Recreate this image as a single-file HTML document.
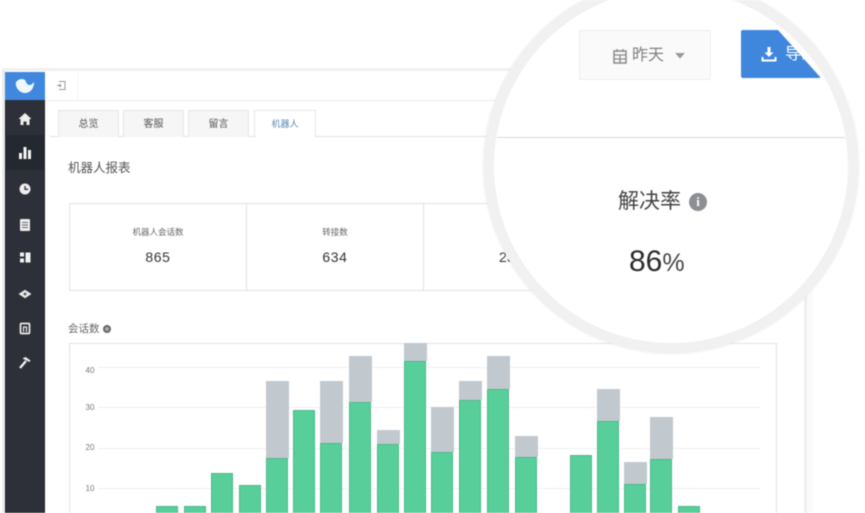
<!DOCTYPE html>
<html lang="zh"><head><meta charset="utf-8"><style>
html,body{margin:0;padding:0;background:#fff}
#p{position:relative;width:865px;height:513px;overflow:hidden;background:#fff;font-family:"Liberation Sans","Noto Sans CJK SC",sans-serif;filter:blur(.45px)}
#p div,#p span.a{position:absolute;box-sizing:border-box}
.t{white-space:nowrap;text-align:center}
.tab{top:110px;height:27px;width:61px;background:#f6f6f6;border:1px solid #e6e6e6;border-bottom:none;font-size:10px;line-height:27px;color:#555;text-align:center}
.g{background:#c1c9ce}
.b{background:#58cf9a;border:1px solid #4cb98b;border-bottom:none}
.gl{left:98px;width:662px;height:1px;background:#efefef}
.yl{left:80px;width:20px;font-size:8px;color:#777;line-height:10px;text-align:center}
</style></head><body><div id="p">
<!-- page frame -->
<div style="left:2px;top:68px;width:803px;height:3px;background:#f0f0f0"></div>
<div style="left:2px;top:70px;width:3px;height:443px;background:#ececec"></div>
<div style="left:804px;top:70px;width:3px;height:443px;background:#efefef"></div>
<div style="left:807px;top:70px;width:6px;height:443px;background:#fbfbfb"></div>
<div style="left:45px;top:100px;width:760px;height:1px;background:#ececec"></div>
<!-- sidebar -->
<div style="left:5px;top:72px;width:40px;height:441px;background:#2e3039;border-right:1px solid #23252c;border-left:1px solid #23252c"></div>
<div style="left:5px;top:72px;width:40px;height:28px;background:#3f88de"></div>
<div style="left:6px;top:135px;width:38px;height:35px;background:#23292f"></div>
<svg style="position:absolute;left:5px;top:72px" width="40" height="300" viewBox="0 0 40 300">
<path d="M11 10c3-4 9-4 10 0 1 3 4 4 6 2 1-1 2-2 2-2 0 7-4 11-9 11s-10-5-9-11z" fill="#fff" opacity=".92"/>
<path d="M20 41l6.500 6h-2v6h-3v-3.500h-3v3.500h-3v-6h-2z" fill="#eeeeee"/>
<path d="M14 81h3v6h-3zM18.500 75h3v12h-3zM23 78h3v9h-3z" fill="#f4f4f4"/>
<circle cx="20" cy="117" r="5.500" fill="#eeeeee"/><path d="M20 114v3.300h3" stroke="#33353d" stroke-width="1.300" fill="none"/>
<rect x="15" y="147" width="10" height="12" rx="1" fill="#eeeeee"/><path d="M17 150.500h6M17 153h6M17 155.500h6" stroke="#666" stroke-width="1"/>
<path d="M15 180.500h4v4h-4zM15 186.500h4v4h-4zM20.500 180.500h5v10h-5z" fill="#f2f2f2"/>
<path d="M13.500 222l6.500-4.300 6.500 4.300-6.500 4.300z" fill="#e8e8e8"/><circle cx="20" cy="222" r="1.400" fill="#555"/>
<rect x="15.500" y="251.500" width="9" height="10" rx="1" fill="none" stroke="#ececec" stroke-width="1.700"/><path d="M18.500 260v-5h3v5" stroke="#ececec" stroke-width="1.200" fill="none"/>
<path d="M15 296l6-7" stroke="#f2f2f2" stroke-width="2.300"/><path d="M17.500 286.500l7 3.500 1-1.500-5-3.500z" fill="#f2f2f2"/>
</svg>
<!-- top small icon -->
<svg style="position:absolute;left:56px;top:80px" width="11" height="11" viewBox="0 0 11 11"><path d="M3 1.500h6v8H3M1 5.500h4M3.500 4l1.500 1.500L3.500 7" fill="none" stroke="#999" stroke-width="1"/></svg>
<div style="left:77px;top:72px;width:1px;height:28px;background:#f5f5f5"></div>
<!-- tabs -->
<div style="left:50px;top:136px;width:755px;height:1px;background:#e2e2e2"></div>
<div class="tab" style="left:58px">总览</div>
<div class="tab" style="left:123px">客服</div>
<div class="tab" style="left:188px">留言</div>
<div class="tab" style="left:254px;width:62px;background:#fff;color:#5b86b5;height:28px;font-size:9px">机器人</div>
<div class="t" style="left:68px;top:159px;font-size:12.500px;line-height:18px;color:#555">机器人报表</div>
<!-- cards -->
<div style="left:69px;top:203px;width:600px;height:88px;border:1px solid #e2e2e2"></div>
<div style="left:246px;top:203px;width:1px;height:88px;background:#e2e2e2"></div>
<div style="left:423px;top:203px;width:1px;height:88px;background:#e2e2e2"></div>
<div class="t" style="left:70px;top:226px;width:176px;font-size:8.500px;line-height:12px;color:#666">机器人会话数</div>
<div class="t" style="left:70px;top:248px;width:176px;font-size:14px;line-height:18px;color:#333;letter-spacing:.6px">865</div>
<div class="t" style="left:247px;top:226px;width:176px;font-size:8.500px;line-height:12px;color:#666">转接数</div>
<div class="t" style="left:247px;top:248px;width:176px;font-size:14px;line-height:18px;color:#333;letter-spacing:.6px">634</div>
<div class="t" style="left:499px;top:248px;font-size:14px;line-height:18px;color:#333">23</div>
<!-- chart -->
<div class="t" style="left:68px;top:322px;font-size:10.500px;line-height:15px;color:#666">会话数</div>
<div style="left:103px;top:325px;width:8px;height:8px;border-radius:50%;border:2px solid #666;background:#aaa"></div>
<div style="left:69px;top:343px;width:708px;height:170px;border:1px solid #e2e2e2;border-bottom:none"></div>
<div class="gl" style="top:367px"></div><div class="gl" style="top:407px"></div><div class="gl" style="top:448px"></div><div class="gl" style="top:488px"></div>
<div class="yl" style="top:366px">40</div><div class="yl" style="top:403px">30</div><div class="yl" style="top:443px">20</div><div class="yl" style="top:484px">10</div>
<!-- bars -->
<div class="b" style="left:156px;top:506px;width:22px;height:7px"></div>
<div class="b" style="left:184px;top:506px;width:22px;height:7px"></div>
<div class="b" style="left:211px;top:473px;width:22px;height:40px"></div>
<div class="b" style="left:239px;top:485px;width:22px;height:28px"></div>
<div class="g" style="left:266px;top:381px;width:23px;height:77px"></div><div class="b" style="left:266px;top:458px;width:22px;height:55px"></div>
<div class="b" style="left:293px;top:410px;width:22px;height:103px"></div>
<div class="g" style="left:320px;top:381px;width:23px;height:62px"></div><div class="b" style="left:320px;top:443px;width:22px;height:70px"></div>
<div class="g" style="left:349px;top:356px;width:23px;height:46px"></div><div class="b" style="left:349px;top:402px;width:22px;height:111px"></div>
<div class="g" style="left:377px;top:430px;width:23px;height:14px"></div><div class="b" style="left:377px;top:444px;width:22px;height:69px"></div>
<div class="g" style="left:404px;top:343px;width:23px;height:18px"></div><div class="b" style="left:404px;top:361px;width:22px;height:152px"></div>
<div class="g" style="left:431px;top:407px;width:23px;height:45px"></div><div class="b" style="left:431px;top:452px;width:22px;height:61px"></div>
<div class="g" style="left:459px;top:381px;width:23px;height:19px"></div><div class="b" style="left:459px;top:400px;width:22px;height:113px"></div>
<div class="g" style="left:487px;top:356px;width:23px;height:33px"></div><div class="b" style="left:487px;top:389px;width:22px;height:124px"></div>
<div class="g" style="left:515px;top:436px;width:23px;height:21px"></div><div class="b" style="left:515px;top:457px;width:22px;height:56px"></div>
<div class="b" style="left:570px;top:455px;width:22px;height:58px"></div>
<div class="g" style="left:597px;top:389px;width:23px;height:32px"></div><div class="b" style="left:597px;top:421px;width:22px;height:92px"></div>
<div class="g" style="left:624px;top:462px;width:23px;height:22px"></div><div class="b" style="left:624px;top:484px;width:22px;height:29px"></div>
<div class="g" style="left:650px;top:417px;width:23px;height:42px"></div><div class="b" style="left:650px;top:459px;width:22px;height:54px"></div>
<div class="b" style="left:678px;top:506px;width:22px;height:7px"></div>
<!-- magnifier -->
<div style="left:484px;top:-21px;width:374px;height:374px;border-radius:50%;background:#fff;border:10px solid #f1f1f1;box-shadow:0 0 3px #e2e2e2"></div>
<div style="left:497px;top:137px;width:348px;height:1px;background:#d9d9d9"></div>
<div style="left:579px;top:30px;width:132px;height:50px;background:#fafafa;border:1px solid #eeeeee;border-radius:2px"></div>
<svg style="position:absolute;left:612px;top:48px" width="16" height="16" viewBox="0 0 16 16"><rect x="2" y="3" width="12" height="12" fill="none" stroke="#8a8a8a" stroke-width="1.500"/><path d="M2 7h12M8 7v8M2 11h12M5 1v3M11 1v3" stroke="#8a8a8a" stroke-width="1.300"/></svg>
<div class="t" style="left:632px;top:45px;font-size:16px;line-height:22px;color:#808080">昨天</div>
<svg style="position:absolute;left:675px;top:53px" width="10" height="6" viewBox="0 0 10 6"><path d="M0 0h10L5 5.500z" fill="#999"/></svg>
<div style="left:741px;top:30px;width:80px;height:48px;background:#3f87dc;border-radius:2px;clip-path:polygon(0 0,37px 0,80px 48px,0 48px);color:#fff;font-size:16px;line-height:50px;overflow:hidden"><span class="a" style="left:44px;top:0">导出</span></div>
<svg style="position:absolute;left:760px;top:45px" width="18" height="18" viewBox="0 0 18 18"><path d="M9 2v7" stroke="#fff" stroke-width="3"/><path d="M4.500 7.500h9L9 12z" fill="#fff"/><path d="M2.500 12v3.500h13V12" fill="none" stroke="#fff" stroke-width="2"/></svg>
<div class="t" style="left:618px;top:188px;font-size:21px;line-height:28px;color:#444">解决率</div>
<div style="left:689px;top:193px;width:18px;height:18px;border-radius:50%;background:#8b8f93;color:#fff;font:bold 13px/18px 'Liberation Serif',serif;text-align:center">i</div>
<div class="t" style="left:629px;top:244px;font-size:30px;line-height:36px;color:#2c2c2c">86<span style="font-size:25px;color:#444">%</span></div>
</div></body></html>
